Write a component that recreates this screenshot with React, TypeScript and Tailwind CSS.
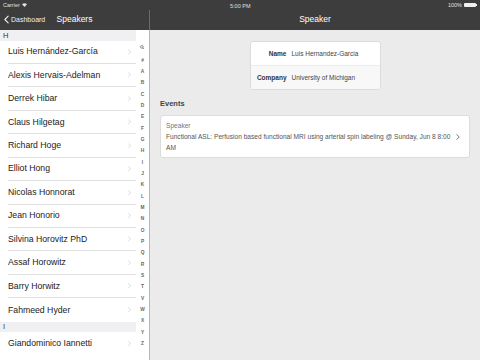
import React from 'react';

const SECTIONS: { letter: string; names: string[] }[] = [
  {
    letter: 'H',
    names: [
      'Luis Hernández-García',
      'Alexis Hervais-Adelman',
      'Derrek Hibar',
      'Claus Hilgetag',
      'Richard Hoge',
      'Elliot Hong',
      'Nicolas Honnorat',
      'Jean Honorio',
      'Silvina Horovitz PhD',
      'Assaf Horowitz',
      'Barry Horwitz',
      'Fahmeed Hyder',
    ],
  },
  { letter: 'I', names: ['Giandominico Iannetti'] },
];

const INDEX = ['#', 'A', 'B', 'C', 'D', 'E', 'F', 'G', 'H', 'I', 'J', 'K', 'L', 'M', 'N', 'O', 'P', 'Q', 'R', 'S', 'T', 'V', 'W', 'X', 'Y', 'Z'];

const font = { fontFamily: '"Liberation Sans", Arial, sans-serif' };

const Chevron = ({ className, left }: { className?: string; left?: boolean }) => (
  <svg viewBox="0 0 6 10" className={className} fill="none" stroke="currentColor" strokeWidth="1.3" strokeLinecap="round" strokeLinejoin="round">
    <path d={left ? 'M5 1L1 5l4 4' : 'M1 1l4 4-4 4'} />
  </svg>
);

const StatusBar = () => (
  <div className="h-[9.5px] flex items-center justify-between px-[3px] text-[5.5px] text-[#e0e0e0] relative">
    <div className="flex items-center gap-[2px]">
      <span>Carrier</span>
      <svg viewBox="0 0 10 8" className="w-[5px] h-[4px]" fill="#e0e0e0">
        <path d="M5 8L0 2.5Q5 -1.5 10 2.5Z" />
      </svg>
    </div>
    <span className="absolute left-[230px] top-[2px]">5:00 PM</span>
    <div className="flex items-center gap-[2px]">
      <span>100%</span>
      <div className="flex items-center">
        <div className="w-[12px] h-[4.5px] bg-[#f0f0f0] rounded-[1px]" />
        <div className="w-[1px] h-[2px] bg-[#f0f0f0]" />
      </div>
    </div>
  </div>
);

const SpeakerList = () => (
  <div className="flex flex-1 min-h-0 bg-white overflow-hidden">
    <div className="w-[136px] shrink-0">
      {SECTIONS.map((s) => (
        <div key={s.letter}>
          <div className="h-[10.5px] bg-[#f0f0f2] px-[3px] flex items-center text-[7.5px] text-[#333]">{s.letter}</div>
          {s.names.map((n, i) => (
            <div key={n} className="h-[23.44px] pl-[8px] flex">
              <div className={`flex-1 flex items-center justify-between pr-[5px] ${i < s.names.length - 1 ? 'border-b border-[#e0e0e0]' : ''}`}>
                <span className="text-[8.7px] text-[#222]">{n}</span>
                <Chevron className="w-[3px] h-[5.5px] text-[#c4c4c8]" />
              </div>
            </div>
          ))}
        </div>
      ))}
    </div>
    <div className="flex-1 flex flex-col items-center pt-[15px] text-[4.8px] font-bold text-[#666]">
      <svg viewBox="0 0 10 10" className="w-[4.5px] h-[4.5px] mb-[5px]" fill="none" stroke="#666" strokeWidth="1.6">
        <circle cx="4.2" cy="4.2" r="3" />
        <path d="M6.5 6.5L9 9" />
      </svg>
      {INDEX.map((l) => (
        <div key={l} className="h-[11.35px] leading-[11.35px]">{l}</div>
      ))}
    </div>
  </div>
);

export default function App() {
  return (
    <div className="w-[480px] h-[360px] flex flex-col bg-[#ebebeb] overflow-hidden" style={font}>
      <div className="bg-[#3d3d3d] shrink-0">
        <StatusBar />
        <div className="h-[20.5px] flex">
          <div className="w-[150px] flex items-center relative border-r border-[#6a6a6a]">
            <div className="flex items-center pl-[4px] gap-[2px] text-[#f0f0f0]">
              <Chevron left className="w-[5px] h-[9px]" />
              <span className="text-[7px]">Dashboard</span>
            </div>
            <span className="absolute left-0 right-0 text-center text-[8.5px] text-white pointer-events-none">Speakers</span>
          </div>
          <div className="flex-1 flex items-center justify-center text-[8.5px] text-white">Speaker</div>
        </div>
      </div>
      <div className="flex flex-1 min-h-0">
        <div className="w-[150px] shrink-0 flex flex-col border-r border-[#b8b8b8]">
          <SpeakerList />
        </div>
        <div className="flex-1 flex flex-col">
          <div className="self-center mt-[11px] w-[131px] bg-white rounded-[3px] border border-[#dcdcdc] overflow-hidden text-[6.5px]">
            <div className="h-[24px] flex items-center border-b border-[#ececec]">
              <span className="w-[36px] text-right font-bold text-[#333]">Name</span>
              <span className="ml-[5px] text-[#444]">Luis Hernandez-Garcia</span>
            </div>
            <div className="h-[23px] flex items-center bg-[#f8f8f8]">
              <span className="w-[36px] text-right font-bold text-[#333]">Company</span>
              <span className="ml-[5px] text-[#444]">University of Michigan</span>
            </div>
          </div>
          <div className="mt-[8px] ml-[10px] text-[7.5px] font-bold text-[#444]">Events</div>
          <div className="mx-[10px] mt-[6px] bg-white rounded-[3px] border border-[#dcdcdc] flex items-center pl-[5px] pr-[9px] py-[4px]">
            <div className="flex-1 text-[6.6px] leading-[11px]">
              <div className="text-[#777]">Speaker</div>
              <div className="text-[#555] pr-[4px]">
                Functional ASL: Perfusion based functional MRI using arterial spin labeling @ Sunday, Jun 8 8:00 AM
              </div>
            </div>
            <Chevron className="w-[4px] h-[6px] text-[#555]" />
          </div>
        </div>
      </div>
    </div>
  );
}
